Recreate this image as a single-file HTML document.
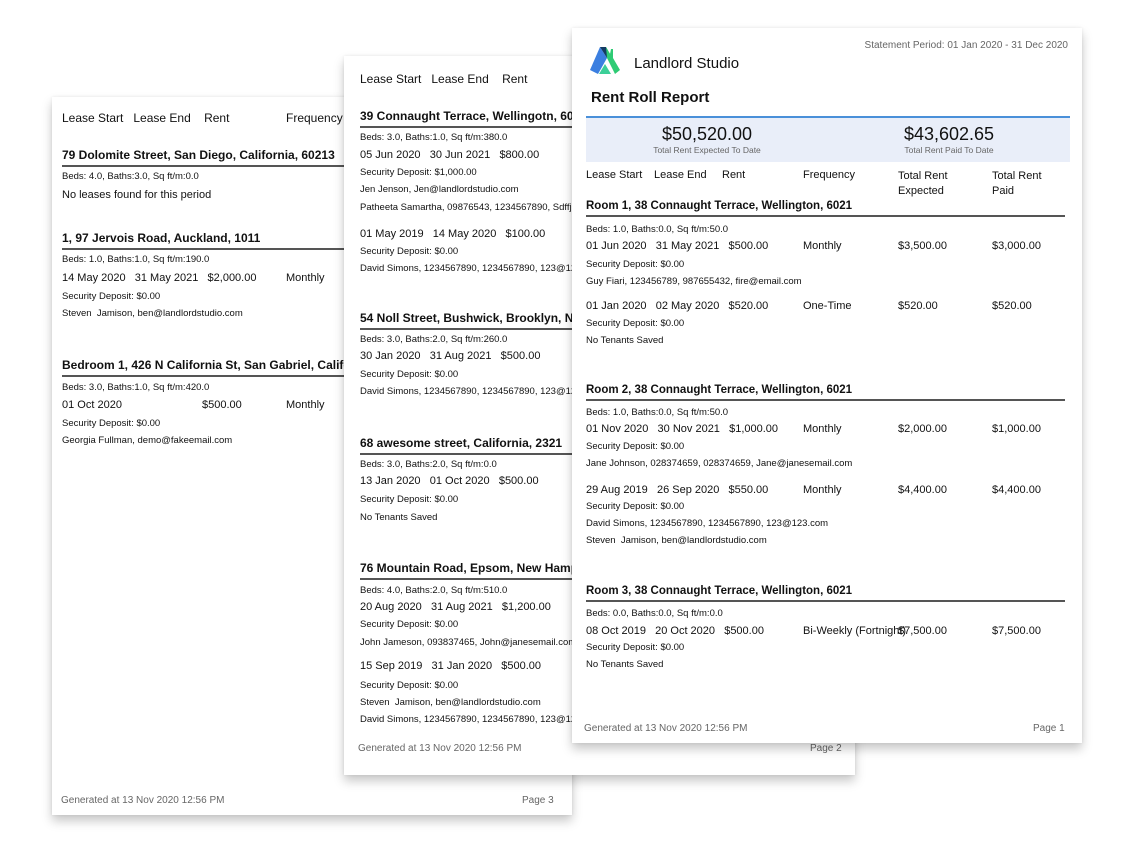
<html><head><style>
body{margin:0;width:1140px;height:843px;background:#fff;font-family:"Liberation Sans",sans-serif;color:#111;position:relative;overflow:hidden}
.pg{position:absolute;background:#fff;box-shadow:0 6px 10px rgba(0,0,0,0.22),0 0 3px rgba(0,0,0,0.08)}
.t{position:absolute;white-space:nowrap;font-size:12px}
.s{position:absolute;white-space:nowrap;font-size:9.5px}
.h{position:absolute;white-space:nowrap;font-size:12px;font-weight:bold;padding-bottom:3px;border-bottom:2px solid #555}
.g{color:#666;font-size:10px;position:absolute;white-space:nowrap}
</style></head><body>
<!-- page 3 -->
<div class="pg" style="left:52px;top:97px;width:520px;height:718px;overflow:hidden">
<div class="t" style="left:10px;top:14px">Lease Start&nbsp;&nbsp; Lease End&nbsp;&nbsp;&nbsp; Rent</div>
<div class="t" style="left:234px;top:14px">Frequency</div>
<div class="h" style="left:10px;top:51px;width:300px">79 Dolomite Street, San Diego, California, 60213</div>
<div class="s" style="left:10px;top:74px">Beds: 4.0, Baths:3.0, Sq ft/m:0.0</div>
<div class="t" style="left:10px;top:92px;font-size:11px">No leases found for this period</div>
<div class="h" style="left:10px;top:134px;width:300px">1, 97 Jervois Road, Auckland, 1011</div>
<div class="s" style="left:10px;top:157px">Beds: 1.0, Baths:1.0, Sq ft/m:190.0</div>
<div class="t" style="left:10px;top:175px;font-size:11px">14 May 2020&nbsp;&nbsp; 31 May 2021&nbsp;&nbsp; $2,000.00</div>
<div class="t" style="left:234px;top:175px;font-size:11px">Monthly</div>
<div class="s" style="left:10px;top:194px">Security Deposit: $0.00</div>
<div class="s" style="left:10px;top:211px">Steven&nbsp; Jamison, ben@landlordstudio.com</div>
<div class="h" style="left:10px;top:261px;width:300px">Bedroom 1, 426 N California St, San Gabriel, California</div>
<div class="s" style="left:10px;top:285px">Beds: 3.0, Baths:1.0, Sq ft/m:420.0</div>
<div class="t" style="left:10px;top:302px;font-size:11px">01 Oct 2020</div>
<div class="t" style="left:150px;top:302px;font-size:11px">$500.00</div>
<div class="t" style="left:234px;top:302px;font-size:11px">Monthly</div>
<div class="s" style="left:10px;top:321px">Security Deposit: $0.00</div>
<div class="s" style="left:10px;top:338px">Georgia Fullman, demo@fakeemail.com</div>
<div class="g" style="left:9px;top:698px">Generated at 13 Nov 2020 12:56 PM</div>
<div class="g" style="left:470px;top:698px">Page 3</div>
</div>
<!-- page 2 -->
<div class="pg" style="left:344px;top:56px;width:511px;height:719px;overflow:hidden">
<div class="t" style="left:16px;top:16px">Lease Start&nbsp;&nbsp; Lease End&nbsp;&nbsp;&nbsp; Rent</div>
<div class="h" style="left:16px;top:53px;width:230px">39 Connaught Terrace, Wellingotn, 6021</div>
<div class="s" style="left:16px;top:76px">Beds: 3.0, Baths:1.0, Sq ft/m:380.0</div>
<div class="t" style="left:16px;top:93px;font-size:11px">05 Jun 2020&nbsp;&nbsp; 30 Jun 2021&nbsp;&nbsp; $800.00</div>
<div class="s" style="left:16px;top:111px">Security Deposit: $1,000.00</div>
<div class="s" style="left:16px;top:128px">Jen Jenson, Jen@landlordstudio.com</div>
<div class="s" style="left:16px;top:146px">Patheeta Samartha, 09876543, 1234567890, Sdffjl</div>
<div class="t" style="left:16px;top:172px;font-size:11px">01 May 2019&nbsp;&nbsp; 14 May 2020&nbsp;&nbsp; $100.00</div>
<div class="s" style="left:16px;top:190px">Security Deposit: $0.00</div>
<div class="s" style="left:16px;top:207px">David Simons, 1234567890, 1234567890, 123@123</div>
<div class="h" style="left:16px;top:255px;width:230px">54 Noll Street, Bushwick, Brooklyn, New York</div>
<div class="s" style="left:16px;top:278px">Beds: 3.0, Baths:2.0, Sq ft/m:260.0</div>
<div class="t" style="left:16px;top:294px;font-size:11px">30 Jan 2020&nbsp;&nbsp; 31 Aug 2021&nbsp;&nbsp; $500.00</div>
<div class="s" style="left:16px;top:313px">Security Deposit: $0.00</div>
<div class="s" style="left:16px;top:330px">David Simons, 1234567890, 1234567890, 123@123</div>
<div class="h" style="left:16px;top:380px;width:230px">68 awesome street, California, 2321</div>
<div class="s" style="left:16px;top:403px">Beds: 3.0, Baths:2.0, Sq ft/m:0.0</div>
<div class="t" style="left:16px;top:419px;font-size:11px">13 Jan 2020&nbsp;&nbsp; 01 Oct 2020&nbsp;&nbsp; $500.00</div>
<div class="s" style="left:16px;top:438px">Security Deposit: $0.00</div>
<div class="s" style="left:16px;top:456px">No Tenants Saved</div>
<div class="h" style="left:16px;top:505px;width:230px">76 Mountain Road, Epsom, New Hampshire</div>
<div class="s" style="left:16px;top:529px">Beds: 4.0, Baths:2.0, Sq ft/m:510.0</div>
<div class="t" style="left:16px;top:545px;font-size:11px">20 Aug 2020&nbsp;&nbsp; 31 Aug 2021&nbsp;&nbsp; $1,200.00</div>
<div class="s" style="left:16px;top:563px">Security Deposit: $0.00</div>
<div class="s" style="left:16px;top:581px">John Jameson, 093837465, John@janesemail.com</div>
<div class="t" style="left:16px;top:604px;font-size:11px">15 Sep 2019&nbsp;&nbsp; 31 Jan 2020&nbsp;&nbsp; $500.00</div>
<div class="s" style="left:16px;top:624px">Security Deposit: $0.00</div>
<div class="s" style="left:16px;top:641px">Steven&nbsp; Jamison, ben@landlordstudio.com</div>
<div class="s" style="left:16px;top:658px">David Simons, 1234567890, 1234567890, 123@123</div>
<div class="g" style="left:14px;top:687px">Generated at 13 Nov 2020 12:56 PM</div>
<div class="g" style="left:466px;top:687px">Page 2</div>
</div>
<!-- page 1 -->
<div class="pg" style="left:572px;top:28px;width:510px;height:715px">
<svg style="position:absolute;left:18px;top:16px" width="30" height="32" viewBox="0 0 30 32">
<polygon points="0,26 10,3 17,14 8,30" fill="#3b7fe0"/>
<polygon points="10,3 16,3 20,10 17,14" fill="#133a63"/>
<polygon points="16,3 20,10 21,5 23,5 23,14 30,26 25,30 17,14" fill="#2ecb74"/>
<polygon points="15,20 21,30 9,30" fill="#3ccf98"/>
</svg>
<div class="t" style="left:62px;top:27px;font-size:15px">Landlord Studio</div>
<div class="g" style="right:14px;top:12px;font-size:10px">Statement Period: 01 Jan 2020 - 31 Dec 2020</div>
<div class="t" style="left:19px;top:61px;font-size:15px;font-weight:bold">Rent Roll Report</div>
<div style="position:absolute;left:14px;top:88px;width:484px;height:44px;background:#e9eef9;border-top:2px solid #4a90d9"></div>
<div class="t" style="left:14px;top:96px;width:242px;text-align:center;font-size:18px">$50,520.00</div>
<div class="g" style="left:14px;top:117px;width:242px;text-align:center;font-size:8.5px">Total Rent Expected To Date</div>
<div class="t" style="left:256px;top:96px;width:242px;text-align:center;font-size:18px">$43,602.65</div>
<div class="g" style="left:256px;top:117px;width:242px;text-align:center;font-size:8.5px">Total Rent Paid To Date</div>
<div class="s" style="left:14px;top:141px;font-size:11px">Lease Start</div>
<div class="s" style="left:82px;top:141px;font-size:11px">Lease End</div>
<div class="s" style="left:150px;top:141px;font-size:11px">Rent</div>
<div class="s" style="left:231px;top:141px;font-size:11px">Frequency</div>
<div class="s" style="left:326px;top:141px;font-size:11px;line-height:15px">Total Rent<br>Expected</div>
<div class="s" style="left:420px;top:141px;font-size:11px;line-height:15px">Total Rent<br>Paid</div>
<div class="h" style="left:14px;top:172px;width:479px;font-size:11.5px">Room 1, 38 Connaught Terrace, Wellington, 6021</div>
<div class="s" style="left:14px;top:196px">Beds: 1.0, Baths:0.0, Sq ft/m:50.0</div>
<div class="s" style="left:14px;top:212px;font-size:11px">01 Jun 2020&nbsp;&nbsp; 31 May 2021&nbsp;&nbsp; $500.00</div>
<div class="s" style="left:231px;top:212px;font-size:11px">Monthly</div>
<div class="s" style="left:326px;top:212px;font-size:11px">$3,500.00</div>
<div class="s" style="left:420px;top:212px;font-size:11px">$3,000.00</div>
<div class="s" style="left:14px;top:231px">Security Deposit: $0.00</div>
<div class="s" style="left:14px;top:248px">Guy Fiari, 123456789, 987655432, fire@email.com</div>
<div class="s" style="left:14px;top:272px;font-size:11px">01 Jan 2020&nbsp;&nbsp; 02 May 2020&nbsp;&nbsp; $520.00</div>
<div class="s" style="left:231px;top:272px;font-size:11px">One-Time</div>
<div class="s" style="left:326px;top:272px;font-size:11px">$520.00</div>
<div class="s" style="left:420px;top:272px;font-size:11px">$520.00</div>
<div class="s" style="left:14px;top:290px">Security Deposit: $0.00</div>
<div class="s" style="left:14px;top:307px">No Tenants Saved</div>
<div class="h" style="left:14px;top:356px;width:479px;font-size:11.5px">Room 2, 38 Connaught Terrace, Wellington, 6021</div>
<div class="s" style="left:14px;top:379px">Beds: 1.0, Baths:0.0, Sq ft/m:50.0</div>
<div class="s" style="left:14px;top:395px;font-size:11px">01 Nov 2020&nbsp;&nbsp; 30 Nov 2021&nbsp;&nbsp; $1,000.00</div>
<div class="s" style="left:231px;top:395px;font-size:11px">Monthly</div>
<div class="s" style="left:326px;top:395px;font-size:11px">$2,000.00</div>
<div class="s" style="left:420px;top:395px;font-size:11px">$1,000.00</div>
<div class="s" style="left:14px;top:413px">Security Deposit: $0.00</div>
<div class="s" style="left:14px;top:430px">Jane Johnson, 028374659, 028374659, Jane@janesemail.com</div>
<div class="s" style="left:14px;top:456px;font-size:11px">29 Aug 2019&nbsp;&nbsp; 26 Sep 2020&nbsp;&nbsp; $550.00</div>
<div class="s" style="left:231px;top:456px;font-size:11px">Monthly</div>
<div class="s" style="left:326px;top:456px;font-size:11px">$4,400.00</div>
<div class="s" style="left:420px;top:456px;font-size:11px">$4,400.00</div>
<div class="s" style="left:14px;top:473px">Security Deposit: $0.00</div>
<div class="s" style="left:14px;top:490px">David Simons, 1234567890, 1234567890, 123@123.com</div>
<div class="s" style="left:14px;top:507px">Steven&nbsp; Jamison, ben@landlordstudio.com</div>
<div class="h" style="left:14px;top:557px;width:479px;font-size:11.5px">Room 3, 38 Connaught Terrace, Wellington, 6021</div>
<div class="s" style="left:14px;top:580px">Beds: 0.0, Baths:0.0, Sq ft/m:0.0</div>
<div class="s" style="left:14px;top:597px;font-size:11px">08 Oct 2019&nbsp;&nbsp; 20 Oct 2020&nbsp;&nbsp; $500.00</div>
<div class="s" style="left:231px;top:597px;font-size:11px">Bi-Weekly (Fortnight)</div>
<div class="s" style="left:326px;top:597px;font-size:11px">$7,500.00</div>
<div class="s" style="left:420px;top:597px;font-size:11px">$7,500.00</div>
<div class="s" style="left:14px;top:614px">Security Deposit: $0.00</div>
<div class="s" style="left:14px;top:631px">No Tenants Saved</div>
<div class="g" style="left:12px;top:695px">Generated at 13 Nov 2020 12:56 PM</div>
<div class="g" style="left:461px;top:695px">Page 1</div>
</div>
</body></html>
